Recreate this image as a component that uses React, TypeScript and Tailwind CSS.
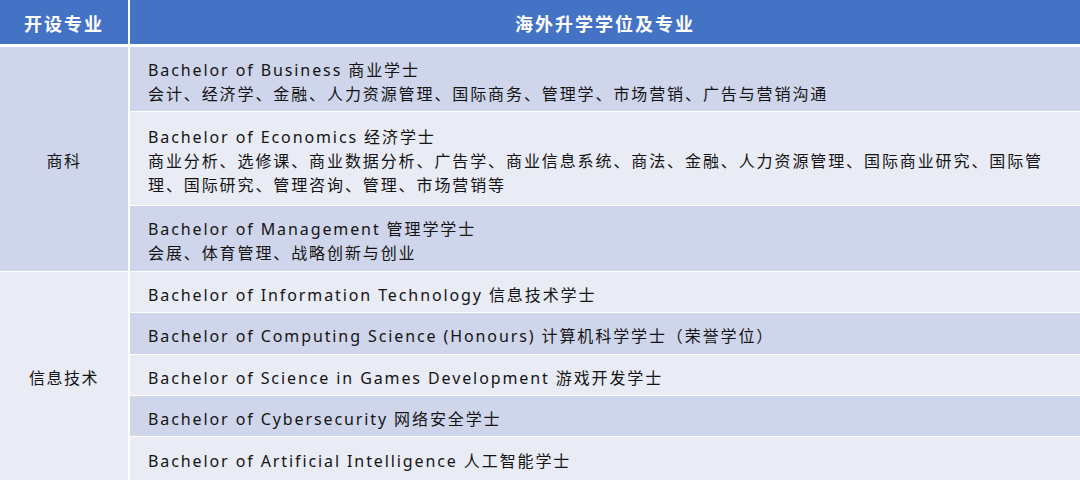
import React from "react";

const FONT = { fontFamily: '"Noto Sans", "Noto Sans CJK SC", sans-serif' };

type Row = { h: string; bg: string; lines: string[] };

const DARK = "bg-[#cfd5ea]";
const LIGHT = "bg-[#e9ebf5]";

const business: Row[] = [
  {
    h: "h-[64px]",
    bg: DARK,
    lines: [
      "Bachelor of Business 商业学士",
      "会计、经济学、金融、人力资源管理、国际商务、管理学、市场营销、广告与营销沟通",
    ],
  },
  {
    h: "h-[93px]",
    bg: LIGHT,
    lines: [
      "Bachelor of Economics 经济学士",
      "商业分析、选修课、商业数据分析、广告学、商业信息系统、商法、金融、人力资源管理、国际商业研究、国际管",
      "理、国际研究、管理咨询、管理、市场营销等",
    ],
  },
  {
    h: "h-[65px]",
    bg: DARK,
    lines: ["Bachelor of Management 管理学学士", "会展、体育管理、战略创新与创业"],
  },
];

const it: Row[] = [
  { h: "h-[40px]", bg: LIGHT, lines: ["Bachelor of Information Technology 信息技术学士"] },
  { h: "h-[41px]", bg: DARK, lines: ["Bachelor of Computing Science (Honours) 计算机科学学士（荣誉学位）"] },
  { h: "h-[40px]", bg: LIGHT, lines: ["Bachelor of Science in Games Development 游戏开发学士"] },
  { h: "h-[40px]", bg: DARK, lines: ["Bachelor of Cybersecurity 网络安全学士"] },
  { h: "h-[43px]", bg: LIGHT, lines: ["Bachelor of Artificial Intelligence 人工智能学士"] },
];

function Cell({ row }: { row: Row }) {
  return (
    <div className={`${row.h} ${row.bg} flex flex-col justify-center pl-[18px] pt-[5px]`}>
      {row.lines.map((l, i) => (
        <div key={i} className="text-[16px] leading-[24px] tracking-[1.9px] text-[#141414] whitespace-nowrap">
          {l}
        </div>
      ))}
    </div>
  );
}

function Section({ label, rows, bg }: { label: string; rows: Row[]; bg: string }) {
  return (
    <div className="flex gap-[2px]">
      <div className={`w-[128px] shrink-0 ${bg} flex items-center justify-center pt-[3px] text-[16px] tracking-[1.5px] text-[#141414]`}>
        {label}
      </div>
      <div className="flex-1 flex flex-col gap-[1px]">
        {rows.map((r, i) => (
          <Cell key={i} row={r} />
        ))}
      </div>
    </div>
  );
}

export default function App() {
  return (
    <div className="w-[1080px] h-[480px] bg-white overflow-hidden flex flex-col" style={FONT}>
      <div className="flex gap-[2px] h-[44px]">
        <div className="w-[128px] shrink-0 bg-[#4472c4] flex items-center justify-center pt-[5px] text-white font-bold text-[18px] tracking-[2px]">
          开设专业
        </div>
        <div className="flex-1 bg-[#4472c4] flex items-center justify-center pt-[5px] text-white font-bold text-[18px] tracking-[2px]">
          海外升学学位及专业
        </div>
      </div>
      <div className="h-[3px]" />
      <Section label="商科" rows={business} bg={DARK} />
      <div className="h-[1px]" />
      <Section label="信息技术" rows={it} bg={LIGHT} />
    </div>
  );
}
